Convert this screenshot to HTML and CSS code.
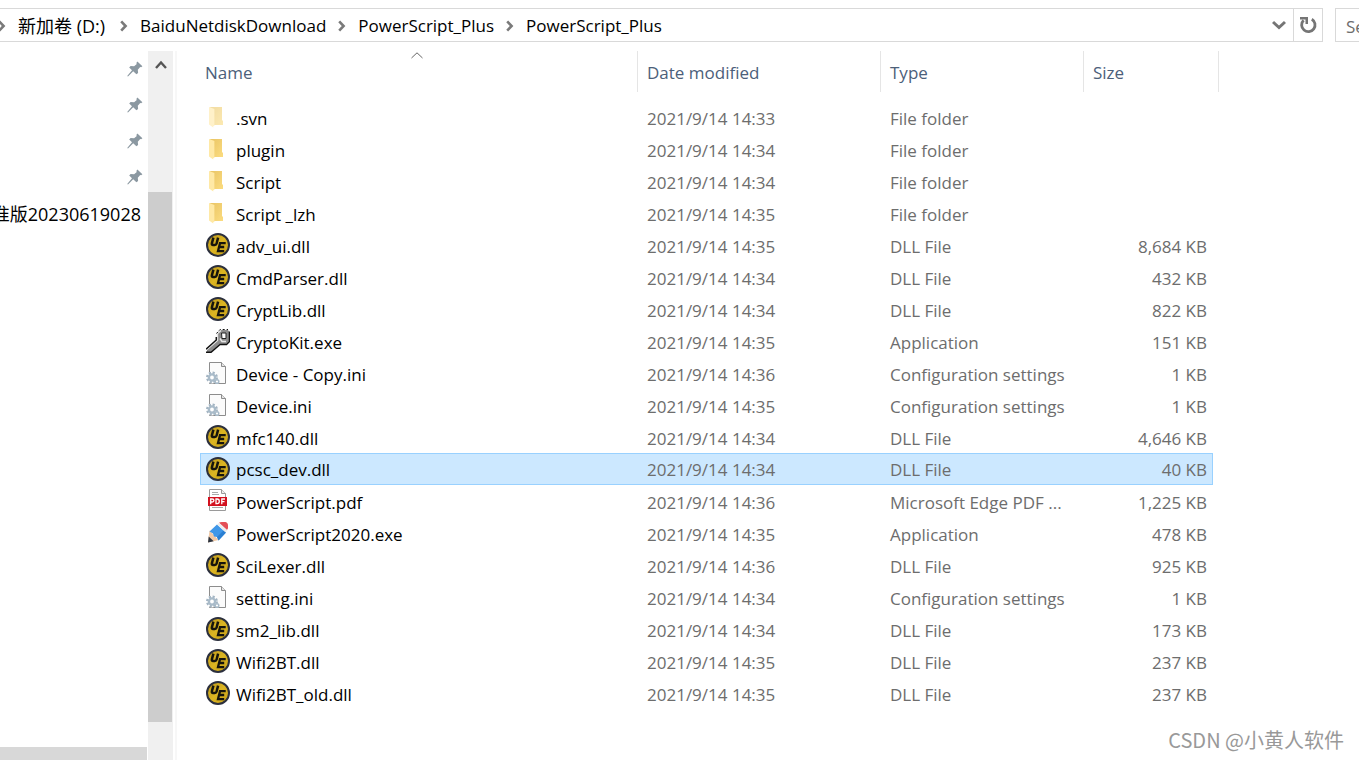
FILE: index.html
```html
<!DOCTYPE html>
<html lang="en">
<head>
<meta charset="utf-8">
<title>PowerScript_Plus</title>
<link rel="stylesheet" href="styles.css">
</head>
<body>
<svg class="sprite" aria-hidden="true">
  <defs>
    <linearGradient id="gold" x1="0" y1="0" x2="1" y2="1"><stop offset="0" stop-color="#b8951c"/><stop offset=".5" stop-color="#dcb522"/><stop offset="1" stop-color="#c39d16"/></linearGradient>
    <linearGradient id="fold-back" x1="0" y1="0" x2="1" y2="1"><stop offset="0" stop-color="#e9c464"/><stop offset="1" stop-color="#fbdc80"/></linearGradient>
  </defs>
  <symbol id="pin" viewBox="0 0 16 16"><path fill="#8b98a1" d="M10.4.6l5 4.6-1.3 1.1-.9-.3-2.4 2.7.3 3.3-1.7 1.3-3.2-3L1 15.4l-.8-.5L5 9.2 2.2 6.4 3.6 5l3.5.2 2.7-2.3-.5-1z"/></symbol>
  <symbol id="chevron" viewBox="0 0 8 12"><path fill="none" stroke="#7a7a7a" stroke-width="2.6" d="M1.2 1.4L5.6 6l-4.4 4.6"/></symbol>
  <symbol id="folder" viewBox="0 0 24 24"><path fill="url(#fold-back)" d="M4 2h12v13l1 1v4H5z"/><path fill="#ffe9a6" d="M3 2l1 .2L8.4 4v17H7.3v1.6L3 19.4z"/></symbol>
  <symbol id="dll" viewBox="0 0 24 24"><circle cx="12" cy="12" r="11" fill="url(#gold)" stroke="#2b2f3d" stroke-width="2"/><path fill="none" stroke="#16140c" stroke-width="2.5" d="M7.4 4.6L5.9 10.3q-.4 1.700 1.200 1.700h1.600q1.500 0 1.900-1.500l1.500-5.900"/><path fill="none" stroke="#16140c" stroke-width="2.3" d="M19.7 10.1h-5.700l-2 8.100h6.200M13.200 14h5"/></symbol>
  <symbol id="wrench" viewBox="0 0 24 24"><path fill="#8c8c8c" d="M14 1h8l1 1.500V12l-3 3h-6.500l-9 8H1v-2.500L11 12V4z"/><path fill="none" stroke="#e6e6e6" stroke-width="1.400" d="M1 20.500L11.500 11.500V4.500L15 1.500M14 9.500l2 3h4"/><path fill="none" stroke="#111" stroke-width="1.500" d="M10.300 8v3L0 20.300M0 23.300h5l9-7.800h6.500l3-3V2.500"/><path fill="none" stroke="#111" stroke-dasharray="2 2" d="M10.500 4.500L14 .500h8"/><path fill="#fff" stroke="#222" d="M15.500 4h4.500v5.500h-4z"/></symbol>
  <symbol id="ini" viewBox="0 0 24 24"><path fill="#fbfbfb" stroke="#8d8d8d" d="M3.500 1.500h12l4 4v17h-16z"/><path fill="#e5e5e5" stroke="#8d8d8d" d="M15.500 1.500v4h4"/><circle cx="6" cy="16.500" r="6" fill="#fff"/><circle cx="6" cy="16.500" r="4.500" fill="none" stroke="#a3b4c2" stroke-width="3" stroke-dasharray="2 1.534"/><circle cx="6" cy="16.500" r="3.100" fill="#fff" stroke="#a9bbc9" stroke-width="2.400"/><circle cx="11" cy="20.500" r="1.800" fill="#fff" stroke="#a9bbc9" stroke-width="1.500"/></symbol>
  <symbol id="pdf" viewBox="0 0 24 24"><path fill="#fff" stroke="#9a9a9a" d="M3.500.5h12l4 4v17h-16z"/><path fill="#eee" stroke="#9a9a9a" d="M15.500.5v4h4"/><path stroke="#aaa" d="M6 3.500h6M6 5.500h7M6 18.500h11"/><path fill="#d3111f" d="M2 8h19v9H2z"/><path fill="none" stroke="#fff" stroke-width="1.300" d="M4.700 15.200V10h1.500q1.700 0 1.700 1.500T6.200 13H5M10 10v4.600h1.200q2.100 0 2.100-2.300T11.200 10zM15.800 15.200V10h3.200M16 12.600h2.500"/></symbol>
  <symbol id="pencil" viewBox="0 0 24 24"><path fill="#f1c9a5" d="M3.500 9.500l9 9.500L2 21.500z"/><path fill="#2c3440" d="M2.700 15.500l5 4.800L2 21.500z"/><path fill="#3f97e8" d="M3.500 10.500L11 3.500l9 8-7.500 8-1.500-3.500-3-.5-1-3z"/><path fill="#2a7fd2" d="M11 16L18 9l2 2.500-7.500 8z"/><path fill="#e44f56" d="M13 1.800Q14 1 16 1h3.500q2.500.5 2.500 3.500v2.500q0 1-1.200 2z"/><path fill="#ececec" d="M11 3.500l2-1.700 8.300 7.400-1.800 2.300z"/></symbol>
</svg>

<header class="topbar">
  <nav class="address" aria-label="Path">
    <ol class="crumbs">
      <li><svg class="sep"><use href="#chevron"/></svg><a class="drive" href="#">新加卷 (D:)</a></li>
      <li><svg class="sep"><use href="#chevron"/></svg><a href="#">BaiduNetdiskDownload</a></li>
      <li><svg class="sep"><use href="#chevron"/></svg><a href="#">PowerScript_Plus</a></li>
      <li><svg class="sep"><use href="#chevron"/></svg><a href="#">PowerScript_Plus</a></li>
    </ol>
    <button class="history" aria-label="Previous locations"><svg width="14" height="10" viewBox="0 0 14 10"><path fill="none" stroke="#757575" stroke-width="3" d="M1 2l6 5.500L13 2"/></svg></button>
    <button class="refresh" aria-label="Refresh"><svg width="18" height="18" viewBox="0 0 18 18"><path fill="none" stroke="#757575" stroke-width="2.800" d="M12.800 3.200A6.700 6.700 0 1 1 4.600 4.200"/><path fill="#757575" d="M1 1h8v7H6.500V3.500H1z"/></svg></button>
  </nav>
  <div class="search-pane"><input class="search" type="text" placeholder="Search" aria-label="Search"></div>
</header>

<main class="explorer">
  <aside class="sidebar">
    <ul class="tree">
      <li><svg class="pin"><use href="#pin"/></svg></li>
      <li><svg class="pin"><use href="#pin"/></svg></li>
      <li><svg class="pin"><use href="#pin"/></svg></li>
      <li><svg class="pin"><use href="#pin"/></svg></li>
      <li class="folder-name">准版20230619028</li>
    </ul>
    <div class="hscroll"></div>
  </aside>
  <div class="vscroll">
    <button class="scroll-up" aria-label="Scroll up"><svg width="12" height="10" viewBox="0 0 12 10"><path fill="none" stroke="#555" stroke-width="2.400" d="M1 8l5-5.500L11 8"/></svg></button>
    <div class="thumb"></div>
  </div>
  <section class="listing">
    <table class="files">
      <colgroup><col><col class="col-date"><col class="col-type"><col class="col-size"></colgroup>
      <thead>
        <tr>
          <th scope="col"><div class="head">Name<svg class="sort" width="12" height="7" viewBox="0 0 12 7"><path fill="none" stroke="#666" d="M.5 6L6 .8 11.500 6"/></svg></div></th>
          <th scope="col"><div class="head">Date modified</div></th>
          <th scope="col"><div class="head">Type</div></th>
          <th scope="col"><div class="head">Size</div></th>
        </tr>
      </thead>
      <tbody>
        <tr><td><div class="cell name"><svg class="icon faded"><use href="#folder"/></svg>.svn</div></td><td><div class="cell">2021/9/14 14:33</div></td><td><div class="cell">File folder</div></td><td><div class="cell size"></div></td></tr>
        <tr><td><div class="cell name"><svg class="icon"><use href="#folder"/></svg>plugin</div></td><td><div class="cell">2021/9/14 14:34</div></td><td><div class="cell">File folder</div></td><td><div class="cell size"></div></td></tr>
        <tr><td><div class="cell name"><svg class="icon"><use href="#folder"/></svg>Script</div></td><td><div class="cell">2021/9/14 14:34</div></td><td><div class="cell">File folder</div></td><td><div class="cell size"></div></td></tr>
        <tr><td><div class="cell name"><svg class="icon"><use href="#folder"/></svg>Script _lzh</div></td><td><div class="cell">2021/9/14 14:35</div></td><td><div class="cell">File folder</div></td><td><div class="cell size"></div></td></tr>
        <tr><td><div class="cell name"><svg class="icon"><use href="#dll"/></svg>adv_ui.dll</div></td><td><div class="cell">2021/9/14 14:35</div></td><td><div class="cell">DLL File</div></td><td><div class="cell size">8,684 KB</div></td></tr>
        <tr><td><div class="cell name"><svg class="icon"><use href="#dll"/></svg>CmdParser.dll</div></td><td><div class="cell">2021/9/14 14:34</div></td><td><div class="cell">DLL File</div></td><td><div class="cell size">432 KB</div></td></tr>
        <tr><td><div class="cell name"><svg class="icon"><use href="#dll"/></svg>CryptLib.dll</div></td><td><div class="cell">2021/9/14 14:34</div></td><td><div class="cell">DLL File</div></td><td><div class="cell size">822 KB</div></td></tr>
        <tr><td><div class="cell name"><svg class="icon"><use href="#wrench"/></svg>CryptoKit.exe</div></td><td><div class="cell">2021/9/14 14:35</div></td><td><div class="cell">Application</div></td><td><div class="cell size">151 KB</div></td></tr>
        <tr><td><div class="cell name"><svg class="icon"><use href="#ini"/></svg>Device - Copy.ini</div></td><td><div class="cell">2021/9/14 14:36</div></td><td><div class="cell">Configuration settings</div></td><td><div class="cell size">1 KB</div></td></tr>
        <tr><td><div class="cell name"><svg class="icon"><use href="#ini"/></svg>Device.ini</div></td><td><div class="cell">2021/9/14 14:35</div></td><td><div class="cell">Configuration settings</div></td><td><div class="cell size">1 KB</div></td></tr>
        <tr><td><div class="cell name"><svg class="icon"><use href="#dll"/></svg>mfc140.dll</div></td><td><div class="cell">2021/9/14 14:34</div></td><td><div class="cell">DLL File</div></td><td><div class="cell size">4,646 KB</div></td></tr>
        <tr class="selected" aria-selected="true"><td><div class="cell name"><svg class="icon"><use href="#dll"/></svg>pcsc_dev.dll</div></td><td><div class="cell">2021/9/14 14:34</div></td><td><div class="cell">DLL File</div></td><td><div class="cell size">40 KB</div></td></tr>
        <tr><td><div class="cell name"><svg class="icon"><use href="#pdf"/></svg>PowerScript.pdf</div></td><td><div class="cell">2021/9/14 14:36</div></td><td><div class="cell">Microsoft Edge PDF ...</div></td><td><div class="cell size">1,225 KB</div></td></tr>
        <tr><td><div class="cell name"><svg class="icon"><use href="#pencil"/></svg>PowerScript2020.exe</div></td><td><div class="cell">2021/9/14 14:35</div></td><td><div class="cell">Application</div></td><td><div class="cell size">478 KB</div></td></tr>
        <tr><td><div class="cell name"><svg class="icon"><use href="#dll"/></svg>SciLexer.dll</div></td><td><div class="cell">2021/9/14 14:36</div></td><td><div class="cell">DLL File</div></td><td><div class="cell size">925 KB</div></td></tr>
        <tr><td><div class="cell name"><svg class="icon"><use href="#ini"/></svg>setting.ini</div></td><td><div class="cell">2021/9/14 14:34</div></td><td><div class="cell">Configuration settings</div></td><td><div class="cell size">1 KB</div></td></tr>
        <tr><td><div class="cell name"><svg class="icon"><use href="#dll"/></svg>sm2_lib.dll</div></td><td><div class="cell">2021/9/14 14:34</div></td><td><div class="cell">DLL File</div></td><td><div class="cell size">173 KB</div></td></tr>
        <tr><td><div class="cell name"><svg class="icon"><use href="#dll"/></svg>Wifi2BT.dll</div></td><td><div class="cell">2021/9/14 14:35</div></td><td><div class="cell">DLL File</div></td><td><div class="cell size">237 KB</div></td></tr>
        <tr><td><div class="cell name"><svg class="icon"><use href="#dll"/></svg>Wifi2BT_old.dll</div></td><td><div class="cell">2021/9/14 14:35</div></td><td><div class="cell">DLL File</div></td><td><div class="cell size">237 KB</div></td></tr>
      </tbody>
    </table>
  </section>
</main>
<div class="watermark">CSDN @小黄人软件</div>
</body>
</html>
```
FILE: styles.css
```css
* { box-sizing: border-box; }

body {
  display: flex;
  flex-direction: column;
  position: relative;
  min-height: 100vh;
  margin: 0;
  background: #fff;
  color: #000;
  font: 17px/24px "Open Sans", "Noto Sans CJK SC", sans-serif;
}

.sprite { position: absolute; width: 0; height: 0; }
button { padding: 0; border: 0; background: none; }
svg { flex: none; }
ol, ul { margin: 0; padding: 0; list-style: none; }

.topbar {
  display: flex;
  gap: 12px;
  padding: 8px 0 9px;
}
.address {
  display: flex;
  flex: 1;
  height: 34px;
  border: 1px solid #d9d9d9;
  border-left: 0;
}
.crumbs { display: flex; flex: 1; padding-top: 1px; }
.crumbs li { display: flex; align-items: center; }
.crumbs li:first-child .sep { margin-left: -2px; }
.crumbs a { color: inherit; text-decoration: none; }
.crumbs .drive { padding-right: 3px; font-size: 18px; }
.sep { width: 8px; height: 12px; margin: 0 12px; }
.history { display: flex; align-items: center; justify-content: center; width: 28px; }
.refresh {
  display: flex;
  align-items: center;
  justify-content: center;
  width: 29px;
  border-left: 1px solid #d9d9d9;
}
.search-pane { width: 24px; overflow: hidden; }
.search {
  width: 240px;
  height: 34px;
  padding: 2px 10px 0;
  border: 1px solid #d9d9d9;
  border-radius: 0;
  background: #fff;
  font: inherit;
}
.search::placeholder { color: #6d6d6d; }

.explorer { display: flex; flex: 1; }

.sidebar {
  display: flex;
  flex-direction: column;
  justify-content: space-between;
  width: 147px;
  overflow: hidden;
}
.tree li {
  display: flex;
  align-items: center;
  justify-content: flex-end;
  height: 36px;
  padding-right: 4px;
  white-space: nowrap;
}
.tree .folder-name { padding: 2px 6px 0 0; font-size: 18px; }
.pin { width: 16px; height: 16px; }
.hscroll { height: 13px; background: #d8d8d8; }

.vscroll {
  display: flex;
  flex-direction: column;
  width: 25px;
  margin: 0 2px 0 1px;
  background: #f0f0f0;
}
.scroll-up { height: 29px; }
.thumb {
  flex: 1;
  margin: 112px 1px 38px 0;
  background: #cdcdcd;
}

.listing {
  flex: 1;
  padding: 0 140px 0 23px;
  border-left: 2px solid #f7f7f7;
}
.files {
  width: 100%;
  table-layout: fixed;
  border-collapse: collapse;
}
.col-date { width: 243px; }
.col-type { width: 203px; }
.col-size { width: 135px; }
.files th { padding: 0 0 9px; font-weight: 400; text-align: left; }
.files td { padding: 0; }
.head {
  position: relative;
  padding: 10px 9px 7px;
  border-right: 1px solid #e5e5e5;
  color: #4c607a;
}
th:first-child .head { padding-left: 5px; }
.sort { position: absolute; top: 1px; left: calc(50% - 8px); }
.cell {
  display: flex;
  align-items: center;
  height: 32px;
  padding: 3px 9px 0;
  color: #6d6d6d;
  white-space: nowrap;
}
.name { gap: 6px; padding: 3px 6px 0; color: #000; }
.size { justify-content: flex-end; margin-right: 6px; padding-right: 6px; }
.icon { width: 24px; height: 24px; margin-bottom: 3px; }
.faded { opacity: .6; }
.selected .cell {
  padding-top: 2px;
  padding-bottom: 0;
  border: solid #99d1ff;
  border-width: 1px 0;
  background: #cce8ff;
}
.selected .name { border-left-width: 1px; padding-left: 5px; }
.selected .size { border-right-width: 1px; padding-right: 5px; }

.watermark {
  position: absolute;
  right: 15px;
  bottom: 8px;
  color: #999;
  font: 400 20px/24px "Noto Sans CJK SC", sans-serif;
}
```
